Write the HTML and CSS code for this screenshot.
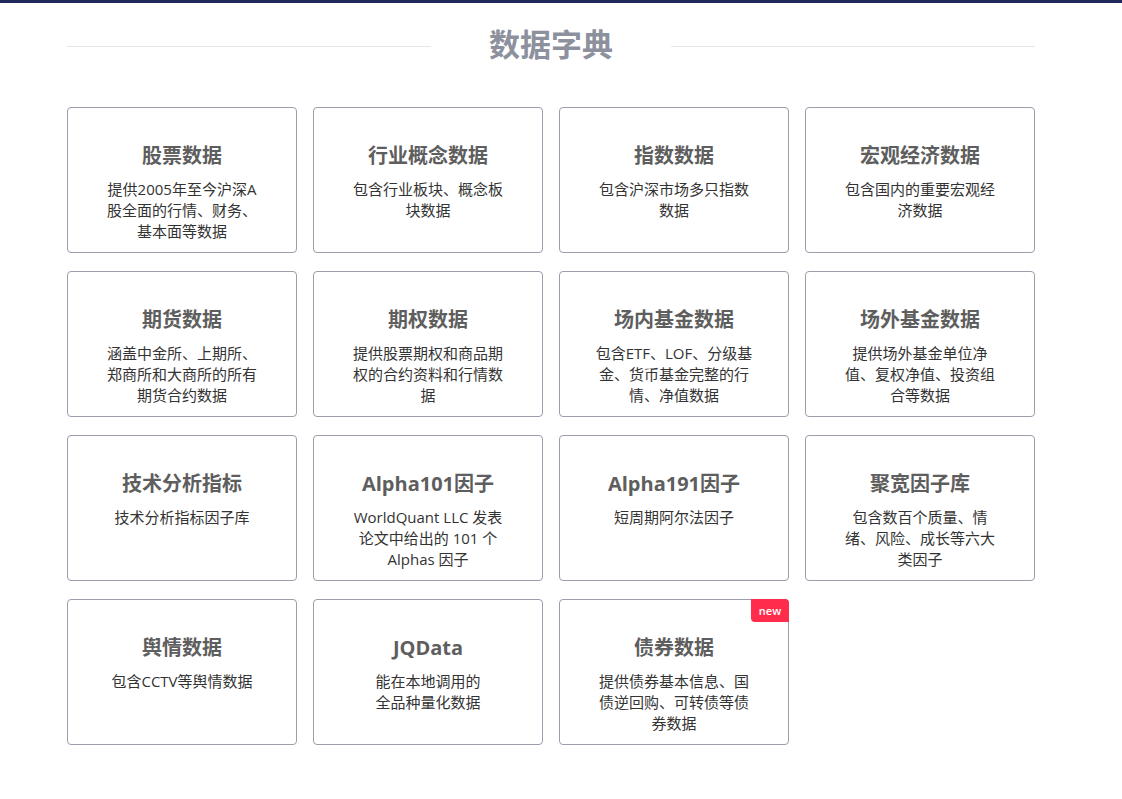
FILE: index.html
```html
<!DOCTYPE html>
<html lang="zh">
<head>
<meta charset="utf-8">
<title>数据字典</title>
<link rel="stylesheet" href="styles.css">
</head>
<body>
<div class="topbar"></div>
<main class="page">
  <header class="heading">
    <span class="rule"></span>
    <h1>数据字典</h1>
    <span class="rule"></span>
  </header>
  <section class="grid">
    <div class="card"><h2>股票数据</h2><p>提供2005年至今沪深A股全面的行情、财务、基本面等数据</p></div>
    <div class="card"><h2>行业概念数据</h2><p>包含行业板块、概念板块数据</p></div>
    <div class="card"><h2>指数数据</h2><p>包含沪深市场多只指数数据</p></div>
    <div class="card"><h2>宏观经济数据</h2><p>包含国内的重要宏观经济数据</p></div>
    <div class="card"><h2>期货数据</h2><p>涵盖中金所、上期所、郑商所和大商所的所有期货合约数据</p></div>
    <div class="card"><h2>期权数据</h2><p>提供股票期权和商品期权的合约资料和行情数据</p></div>
    <div class="card"><h2>场内基金数据</h2><p>包含ETF、LOF、分级基金、货币基金完整的行情、净值数据</p></div>
    <div class="card"><h2>场外基金数据</h2><p>提供场外基金单位净值、复权净值、投资组合等数据</p></div>
    <div class="card"><h2>技术分析指标</h2><p>技术分析指标因子库</p></div>
    <div class="card"><h2>Alpha101因子</h2><p>WorldQuant LLC 发表论文中给出的 101 个 Alphas 因子</p></div>
    <div class="card"><h2>Alpha191因子</h2><p>短周期阿尔法因子</p></div>
    <div class="card"><h2>聚宽因子库</h2><p>包含数百个质量、情绪、风险、成长等六大类因子</p></div>
    <div class="card"><h2>舆情数据</h2><p>包含CCTV等舆情数据</p></div>
    <div class="card"><h2>JQData</h2><p>能在本地调用的<br>全品种量化数据</p></div>
    <div class="card"><span class="badge">new</span><h2>债券数据</h2><p>提供债券基本信息、国债逆回购、可转债等债券数据</p></div>
  </section>
</main>
</body>
</html>
```

FILE: styles.css
```css
html, body {
  margin: 0;
  padding: 0;
  background: #ffffff;
}
body {
  font-family: "Open Sans", "Noto Sans CJK SC", sans-serif;
  color: #333333;
}
.topbar {
  height: 3px;
  background: #1f2a5b;
}
.page {
  width: 968px;
  margin: 0 0 0 67px;
}
.heading {
  display: flex;
  align-items: center;
  height: 80px;
  margin-bottom: 24px;
}
.rule {
  flex: 1;
  height: 1px;
  background: #e6e6e6;
  margin-top: 6px;
}
.heading h1 {
  margin: 0 58px;
  font-size: 31px;
  line-height: 40px;
  font-weight: 700;
  color: #8c919d;
  font-family: "Noto Sans CJK SC", sans-serif;
}
.grid {
  display: grid;
  grid-template-columns: repeat(4, 230px);
  column-gap: 16px;
  row-gap: 18px;
}
.card {
  position: relative;
  box-sizing: border-box;
  height: 146px;
  border: 1px solid #9b9eab;
  border-radius: 4px;
  padding: 33px 10px 0;
  text-align: center;
}
.card h2 {
  margin: 0 0 8px;
  font-size: 20px;
  line-height: 30px;
  font-weight: 700;
  color: #5e5e5e;
}
.card p {
  margin: 0 auto;
  width: 160px;
  font-size: 15px;
  line-height: 21px;
  color: #333333;
}
.badge {
  position: absolute;
  top: -1px;
  right: -1px;
  width: 38px;
  height: 23px;
  line-height: 23px;
  background: #ff2d4b;
  color: #ffffff;
  font-size: 11px;
  font-weight: 600;
  text-align: center;
  border-radius: 0 4px 0 4px;
}
```
